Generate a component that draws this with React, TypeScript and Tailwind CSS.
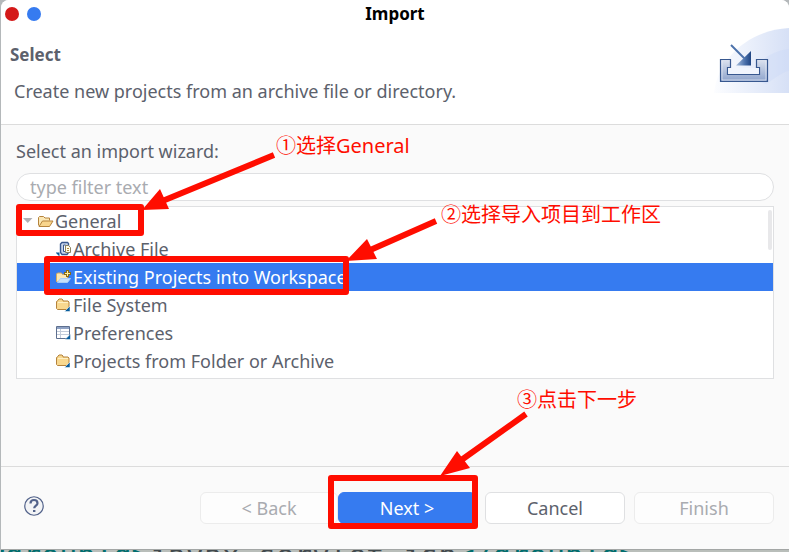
import React from "react";

function FolderIcon() {
  return (
    <svg width="15" height="14" viewBox="0 0 15 14" aria-hidden="true">
      <path d="M.5 10.500v-7L2 2.500V2l1-1h3l1 1v1h5l1 1v6.500l-1 1H1.500z" fill="#f8d88f" stroke="#b5833c" />
      <path d="M2 4.500h10" stroke="#fff0c4" />
      <path d="M14 8v5.500H8.500z" fill="#075c9c" stroke="#fff" strokeWidth=".5" />
    </svg>
  );
}

function OpenFolderIcon() {
  return (
    <svg width="16" height="13" viewBox="0 0 16 13" aria-hidden="true">
      <path d="M.5 10.500V2.500l1-1h4L7 3h4.500v2.500" fill="#fbe8b5" stroke="#b5833c" />
      <path d="M1 11.500 4.500 6h10.500L11.500 11.500z" fill="#f8d58d" stroke="#b5833c" />
    </svg>
  );
}

function ProjectIcon() {
  return (
    <svg width="15" height="14" viewBox="0 0 15 14" aria-hidden="true">
      <path d="M.5 12V4l1-1h4l1 1.500h5V8" fill="#fbe8b5" stroke="#d3a95e" />
      <path d="M1.500 12.500 4.500 8.500h10L11.500 12.500z" fill="#c5e0fb" stroke="#a9cdf5" />
      <path d="M11.500 0v7M8 3.500h7" stroke="#8a6b12" strokeWidth="3" />
      <path d="M11.500 1v5M9 3.500h5" stroke="#fff1a0" />
    </svg>
  );
}

function ArchiveIcon() {
  return (
    <svg width="15" height="16" viewBox="0 0 15 16" aria-hidden="true">
      <path d="M6 1.500h5.500l1 1v9l-1.500 2H6l-1.500-2V3z" fill="#c9d6ec" stroke="#39578e" strokeWidth="1.400" />
      <path d="M7.500 4h2v6.500h-2z" fill="#fff" stroke="#39578e" />
      <path d="M9.500 4.500h3l2 2v5h-5z" fill="#fffbe8" stroke="#8b8465" />
      <path d="M11 7.500h2M11 9.500h2" stroke="#b38b3b" />
      <path d="M-.5 11.500H3.500V15.500z" fill="#075c9c" />
    </svg>
  );
}

function PreferencesIcon() {
  return (
    <svg width="15" height="14" viewBox="0 0 15 14" aria-hidden="true">
      <path d="M.5.500h13v12H.5z" fill="#fff" stroke="#5d6f8f" />
      <path d="M1 2h12" stroke="#8fa2c4" strokeWidth="2" />
      <path d="M1 5.500h12M1 8.500h12M4.500 3v9" stroke="#c3ccda" />
      <path d="M14.500 8v5.500H9z" fill="#075c9c" stroke="#fff" strokeWidth=".5" />
    </svg>
  );
}

function ImportBanner() {
  return (
    <svg width="75" height="66" viewBox="0 0 75 66" aria-hidden="true">
      <defs>
        <linearGradient id="sky" x1="0" x2="1">
          <stop offset="0" stopColor="#fcfdff" />
          <stop offset="1" stopColor="#d6e0f6" />
        </linearGradient>
        <linearGradient id="tray" x1="0" y1="0" x2="0" y2="1">
          <stop offset="0" stopColor="#dde3ef" />
          <stop offset="1" stopColor="#8da3cb" />
        </linearGradient>
        <linearGradient id="head" x1="0" x2="1">
          <stop offset="0" stopColor="#a9c0df" />
          <stop offset=".6" stopColor="#4a70aa" />
          <stop offset="1" stopColor="#1f4583" />
        </linearGradient>
      </defs>
      <path d="M0 65C4 30 35 2 75 0v65z" fill="url(#sky)" />
      <path d="M34 50C44 32 58 23 75 21v22C68 44 62 50 52 56z" fill="#c9d8f5" opacity=".35" />
      <path d="M6.500 31.500h10v8h-3v7h32v-7h-3v-8h11v22h-47z" fill="url(#tray)" stroke="#38588f" strokeWidth="1.200" />
      <path d="M14.100 40h30.800v5.900H14.100z" fill="#f1f5fd" />
      <path d="M8 33v19h44V33" fill="none" stroke="#f1f4fa" opacity=".6" />
      <path d="M17 17 32 32" stroke="#4c72ab" strokeWidth="2" />
      <path d="M37 23v14.500H22z" fill="url(#head)" />
    </svg>
  );
}

function HelpIcon() {
  return (
    <svg width="20" height="20" viewBox="0 0 20 20" fill="none" aria-hidden="true">
      <circle cx="10" cy="10" r="9.250" fill="#f3f4f6" stroke="#52628a" strokeWidth="1.200" />
      <path d="M6.500 7.500C6.500 5 8 4 10 4s3.500 1.200 3.500 3.200c0 2.300-3.300 2.500-3.300 5" stroke="#52628a" strokeWidth="2.200" />
      <path d="M9 14h2.400v2H9z" fill="#52628a" />
    </svg>
  );
}

const items = [
  { label: "Archive File", icon: <ArchiveIcon />, selected: false },
  { label: "Existing Projects into Workspace", icon: <ProjectIcon />, selected: true },
  { label: "File System", icon: <FolderIcon />, selected: false },
  { label: "Preferences", icon: <PreferencesIcon />, selected: false },
  { label: "Projects from Folder or Archive", icon: <FolderIcon />, selected: false },
];

const button = "h-8 min-w-0 flex-1 rounded-md border text-center";

function WizardTree() {
  return (
    <div className="mt-[5px] flex h-[173px] border border-[#dfe0e2] bg-white">
      <ul role="tree" aria-label="Import wizards" className="min-w-0 flex-1">
        <li role="treeitem" aria-expanded="true">
          <div className="flex h-7 items-center pl-1.5">
            <svg width="10" height="6" viewBox="0 0 10 6" className="mr-[5px]" aria-hidden="true">
              <path d="M0 0h9.500L4.750 5z" fill="#b0b1b5" />
            </svg>
            <OpenFolderIcon />
            <span className="pl-px">General</span>
          </div>
          <ul role="group">
            {items.map((item) => (
              <li
                key={item.label}
                role="treeitem"
                aria-selected={item.selected}
                className={
                  item.selected
                    ? "-mr-[5px] flex h-7 items-center gap-0.5 bg-[#367bf0] pl-[39px] text-white"
                    : "flex h-7 items-center gap-0.5 pl-[39px]"
                }
              >
                {item.icon}
                <span className="truncate">{item.label}</span>
              </li>
            ))}
          </ul>
        </li>
      </ul>
      <div className="mt-[3px] mr-px h-10 w-1 rounded-full bg-[#e8e8ea]" />
    </div>
  );
}

function Annotations() {
  return (
    <div className="pointer-events-none absolute inset-0 text-xl leading-6 text-[#ff0d00]">
      <svg className="absolute top-0 left-0" width="791" height="552" viewBox="0 0 791 552" aria-hidden="true">
        <g fill="none" stroke="#ff0d00" strokeWidth="6" strokeLinejoin="round">
          <rect x="19" y="207" width="122" height="26" />
          <rect x="47" y="259" width="299" height="33" />
          <rect x="331" y="478" width="144" height="48" />
          <path d="M274 155 160 202M436 221 368 251M526 414 460 461" />
        </g>
        <path d="M142 210 160 189 169 209zM346 261 367 239 377 259zM440 476 457 451 470 468z" fill="#ff0d00" />
      </svg>
      <p className="absolute top-[134px] left-[276px]">①选择General</p>
      <p className="absolute top-[203px] left-[441px]">②选择导入项目到工作区</p>
      <p className="absolute top-[388px] left-[517px]">③点击下一步</p>
    </div>
  );
}

export default function App() {
  return (
    <div className="relative flex min-h-screen flex-col overflow-hidden bg-white pr-0.5 font-['Noto_Sans','Noto_Sans_CJK_SC',sans-serif] text-lg leading-6 text-[#5c616c]">
      <div className="flex flex-1 flex-col bg-[#b4b8ba] pl-px">
        <main className="flex flex-1 flex-col rounded-t-lg bg-[#fafafa]">
          <header className="rounded-t-lg border-b border-[#dcdcdc] bg-white">
            <div className="grid h-7 grid-cols-3 items-center px-1">
              <div className="flex gap-2">
                <button aria-label="Close" className="size-3.5 rounded-full bg-[#d41919]" />
                <button aria-label="Maximize" className="size-3.5 rounded-full bg-[#367bf0]" />
              </div>
              <h1 className="text-center text-[17px] font-bold text-black">Import</h1>
            </div>
            <div className="flex h-24 justify-between">
              <div className="pt-[15px] pl-[9px]">
                <h2 className="text-[17px] font-bold">Select</h2>
                <p className="mt-3 pl-1">Create new projects from an archive file or directory.</p>
              </div>
              <ImportBanner />
            </div>
          </header>
          <section className="flex-1 px-[15px] pt-3.5">
            <label htmlFor="filter" className="block">
              Select an import wizard:
            </label>
            <input
              id="filter"
              placeholder="type filter text"
              className="mt-2.5 block h-7 w-full rounded-full border border-[#dfe0e2] bg-white px-[13px] outline-none placeholder:text-[#a9abb0]"
            />
            <WizardTree />
          </section>
          <footer className="flex justify-between border-t border-[#dcdcdc] px-[15px] py-[25px]">
            <button aria-label="Help" className="ml-2 self-center pb-1">
              <HelpIcon />
            </button>
            <div className="flex w-4/5 max-w-[574px] gap-[9px]">
              <div className="flex flex-[2_1_0px]">
                <button disabled className={`${button} border-[#ececec] bg-[#fdfdfd] text-[#a9abb0]`}>
                  &lt; Back
                </button>
                <button className={`${button} border-[#367bf0] bg-[#367bf0] text-white`}>Next &gt;</button>
              </div>
              <button className={`${button} border-[#dfe0e2] bg-white`}>Cancel</button>
              <button disabled className={`${button} border-[#ececec] bg-[#fdfdfd] text-[#a9abb0]`}>
                Finish
              </button>
            </div>
          </footer>
        </main>
        <div className="h-[3px] overflow-hidden border-t border-[#a3a6a5] bg-[#b9beba]">
          <code className="-mt-[9px] -ml-3.5 block font-['DejaVu_Sans_Mono',monospace] text-3xl leading-[29px] whitespace-nowrap text-[#006d6d]">
            &lt;groupId&gt;<span className="text-[#41494d]">javax.servlet.jsp</span>&lt;/groupId&gt;
          </code>
        </div>
      </div>
      <Annotations />
    </div>
  );
}
